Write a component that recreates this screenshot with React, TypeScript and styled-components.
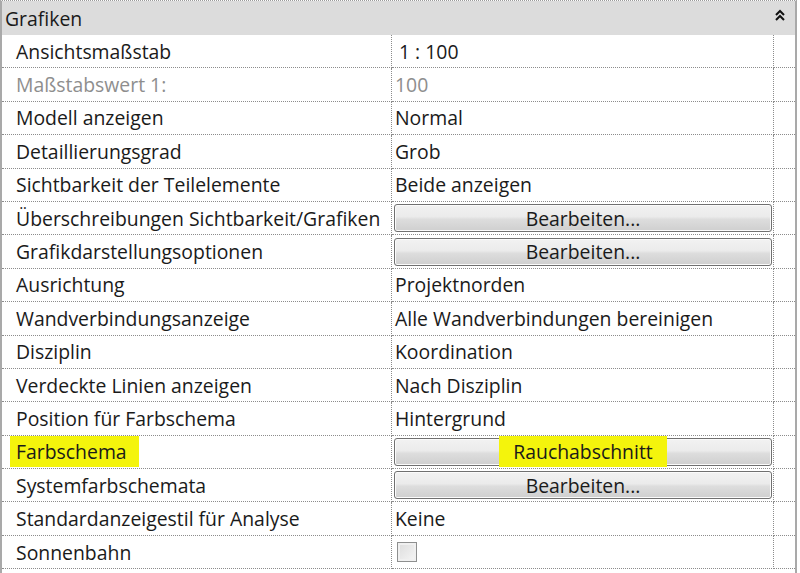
import React from 'react';
import styled, { createGlobalStyle } from 'styled-components';

const GlobalStyle = createGlobalStyle`
  html, body { margin: 0; padding: 0; background: #ffffff; }
  body { font-family: "Open Sans", "Noto Sans", sans-serif; }
`;

// Panel frame
const Panel = styled.div`
  width: 797px;
  height: 573px;
  box-sizing: border-box;
  border-left: 2px solid #a9a9a9;
  border-right: 2px solid #a9a9a9;
  border-top: 1px dotted #9a9a9a;
  display: flex;
  flex-direction: column;
  background: #fff;
`;

const Header = styled.div`
  height: 34px;
  background: #dcdcdc;
  display: flex;
  align-items: center;
  justify-content: space-between;
  padding: 0 10px 0 3px;
  font-size: 19.4px;
  color: #1a1a1a;
`;

const Chevron = styled.svg`
  width: 10px;
  height: 12px;
  margin-top: -6px;
`;

const Grid = styled.div`
  display: grid;
  grid-template-columns: 390px 382px 21px;
  grid-auto-rows: 33.4px;
`;

const Cell = styled.div<{ $muted?: boolean; $pad?: number }>`
  box-sizing: border-box;
  border-bottom: 1px dotted #8c8c8c;
  border-right: 1px dotted #8c8c8c;
  display: flex;
  align-items: center;
  padding-left: ${p => p.$pad ?? 14}px;
  font-size: 19.4px;
  color: ${p => (p.$muted ? '#8e8e8e' : '#1a1a1a')};
  white-space: nowrap;
  overflow: hidden;
`;

const Filler = styled.div`
  box-sizing: border-box;
  border-bottom: 1px dotted #8c8c8c;
`;

const Mark = styled.span<{ $wide?: boolean }>`
  background: #f4f40c;
  padding: ${p => (p.$wide ? '2px 14px' : '2px 12px 2px 6px')};
  margin-left: ${p => (p.$wide ? '0' : '-6px')};
`;

const Button = styled.div`
  box-sizing: border-box;
  width: 378px;
  height: 28px;
  margin-left: 2px;
  border: 1px solid #707070;
  border-radius: 3px;
  background: linear-gradient(#f2f2f2 0%, #ebebeb 45%, #dddddd 55%, #cfcfcf 100%);
  box-shadow: inset 0 0 0 1px #fbfbfb;
  display: flex;
  align-items: center;
  justify-content: center;
  font-size: 19.4px;
  color: #1a1a1a;
`;

const Checkbox = styled.div`
  box-sizing: border-box;
  width: 20px;
  height: 20px;
  margin-left: 5px;
  border: 1px solid #8e8f8f;
  background: linear-gradient(135deg, #dcdcdc, #f6f6f6);
  box-shadow: inset 0 0 0 2px #f0f0f0;
`;

type Row = {
  label: React.ReactNode;
  value?: string;
  button?: React.ReactNode;
  check?: boolean;
  muted?: boolean;
};

const rows: Row[] = [
  { label: 'Ansichtsmaßstab', value: '1 : 100' },
  { label: 'Maßstabswert 1:', value: '100', muted: true },
  { label: 'Modell anzeigen', value: 'Normal' },
  { label: 'Detaillierungsgrad', value: 'Grob' },
  { label: 'Sichtbarkeit der Teilelemente', value: 'Beide anzeigen' },
  { label: 'Überschreibungen Sichtbarkeit/Grafiken', button: 'Bearbeiten...' },
  { label: 'Grafikdarstellungsoptionen', button: 'Bearbeiten...' },
  { label: 'Ausrichtung', value: 'Projektnorden' },
  { label: 'Wandverbindungsanzeige', value: 'Alle Wandverbindungen bereinigen' },
  { label: 'Disziplin', value: 'Koordination' },
  { label: 'Verdeckte Linien anzeigen', value: 'Nach Disziplin' },
  { label: 'Position für Farbschema', value: 'Hintergrund' },
  { label: <Mark>Farbschema</Mark>, button: <Mark $wide>Rauchabschnitt</Mark> },
  { label: 'Systemfarbschemata', button: 'Bearbeiten...' },
  { label: 'Standardanzeigestil für Analyse', value: 'Keine' },
  { label: 'Sonnenbahn', check: true },
];

export default function App() {
  return (
    <>
      <GlobalStyle />
      <Panel>
        <Header>
          <span>Grafiken</span>
          <Chevron viewBox="0 0 10 12">
            <path d="M1 6 L5 2 L9 6 M1 11 L5 7 L9 11" fill="none" stroke="#111" strokeWidth="2" />
          </Chevron>
        </Header>
        <Grid>
          {rows.map((r, i) => (
            <React.Fragment key={i}>
              <Cell $muted={r.muted}>{r.label}</Cell>
              {r.button ? (
                <Cell $pad={0}>
                  <Button>{r.button}</Button>
                </Cell>
              ) : r.check ? (
                <Cell $pad={0}>
                  <Checkbox />
                </Cell>
              ) : (
                <Cell $muted={r.muted} $pad={i === 0 ? 7 : 3}>
                  {r.value}
                </Cell>
              )}
              <Filler />
            </React.Fragment>
          ))}
        </Grid>
      </Panel>
    </>
  );
}
